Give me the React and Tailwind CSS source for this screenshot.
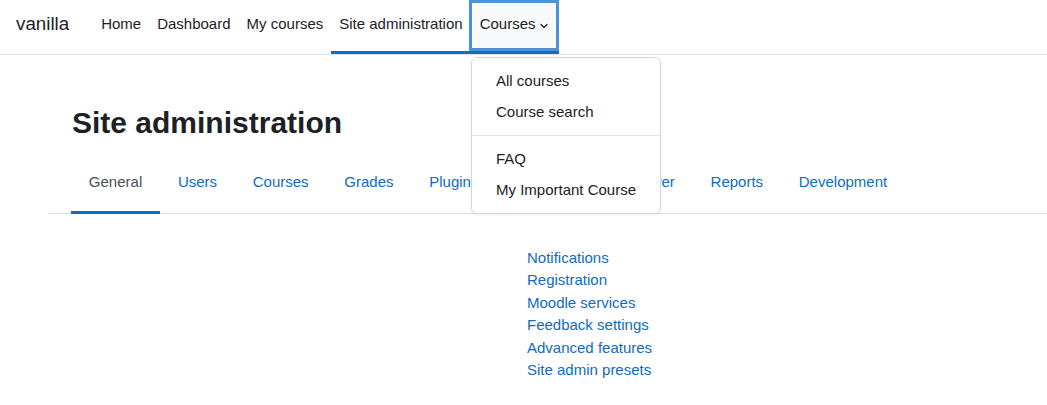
import { useState } from 'react';

const navLinks = ['Home', 'Dashboard', 'My courses'];
const tabs = ['General', 'Users', 'Courses', 'Grades', 'Plugins', 'Appearance', 'Server', 'Reports', 'Development'];
const generalLinks = [
  'Notifications',
  'Registration',
  'Moodle services',
  'Feedback settings',
  'Advanced features',
  'Site admin presets',
];

const Chevron = () => (
  <svg width="8" height="6" viewBox="0 0 8 6" className="ml-[4px] mt-[2px]" fill="none">
    <path d="M1 1.5 L4 4.5 L7 1.5" stroke="#1d2125" strokeWidth="1.2" strokeLinecap="round" strokeLinejoin="round" />
  </svg>
);

export default function App() {
  const [activeTab] = useState('General');

  return (
    <div className="relative min-h-[405px] bg-white text-[15px] leading-[1.5] text-[#1d2125] font-['Liberation_Sans',Arial,sans-serif]">
      {/* Top navbar */}
      <nav className="flex h-[55px] items-stretch border-b border-[#dee2e6] pl-[16px]">
        <div className="flex items-center pb-[8px] mr-[24px] pt-[3px] text-[18.75px] leading-none">vanilla</div>
        {navLinks.map((item) => (
          <a key={item} className="flex items-center px-[8px] pb-[2px] border-b-[3px] border-transparent">
            {item}
          </a>
        ))}
        <a className="flex items-center px-[8px] pb-[2px] border-b-[3px] border-[#0f6cbf]">Site administration</a>
        <button className="-ml-[2px] flex items-center pb-[2px] pl-[11px] pr-[11px] bg-[#f8f9fa] border-b-[3px] border-[#0f6cbf] shadow-[inset_0_0_0_3px_#4b93d6]">
          Courses
          <Chevron />
        </button>
      </nav>

      {/* Courses dropdown menu */}
      <div className="absolute left-[471px] top-[57px] w-[190px] rounded-[6px] border border-[#d3d6da] bg-white py-[8px] whitespace-nowrap shadow-[0_1px_3px_rgba(0,0,0,0.06)]">
        <div className="px-[24px] py-[4px]">All courses</div>
        <div className="px-[24px] py-[4px]">Course search</div>
        <div className="my-[8px] border-t border-[#e3e5e8]" />
        <div className="px-[24px] py-[4px]">FAQ</div>
        <div className="px-[24px] py-[4px]">My Important Course</div>
      </div>

      {/* Page content */}
      <main className="pl-[48px]">
        <h2 className="mt-[50px] ml-[24px] text-[30px] font-bold leading-[1.2]">Site administration</h2>

        <div className="mt-[13px] flex border-b border-[#dee2e6] pl-[23px]">
          {tabs.map((tab) => (
            <a
              key={tab}
              className={
                tab === activeTab
                  ? 'px-[17.85px] pt-[17px] pb-[17px] -mb-px border-b-[3px] border-[#0f6cbf] text-[#495057]'
                  : 'px-[17.85px] pt-[17px] pb-[17px] -mb-px border-b-[3px] border-transparent text-[#0f6cbf]'
              }
            >
              {tab}
            </a>
          ))}
        </div>

        <ul className="mt-[33px] ml-[479px] flex flex-col">
          {generalLinks.map((link) => (
            <li key={link}>
              <a className="text-[#0f6cbf]">{link}</a>
            </li>
          ))}
        </ul>
      </main>
    </div>
  );
}
